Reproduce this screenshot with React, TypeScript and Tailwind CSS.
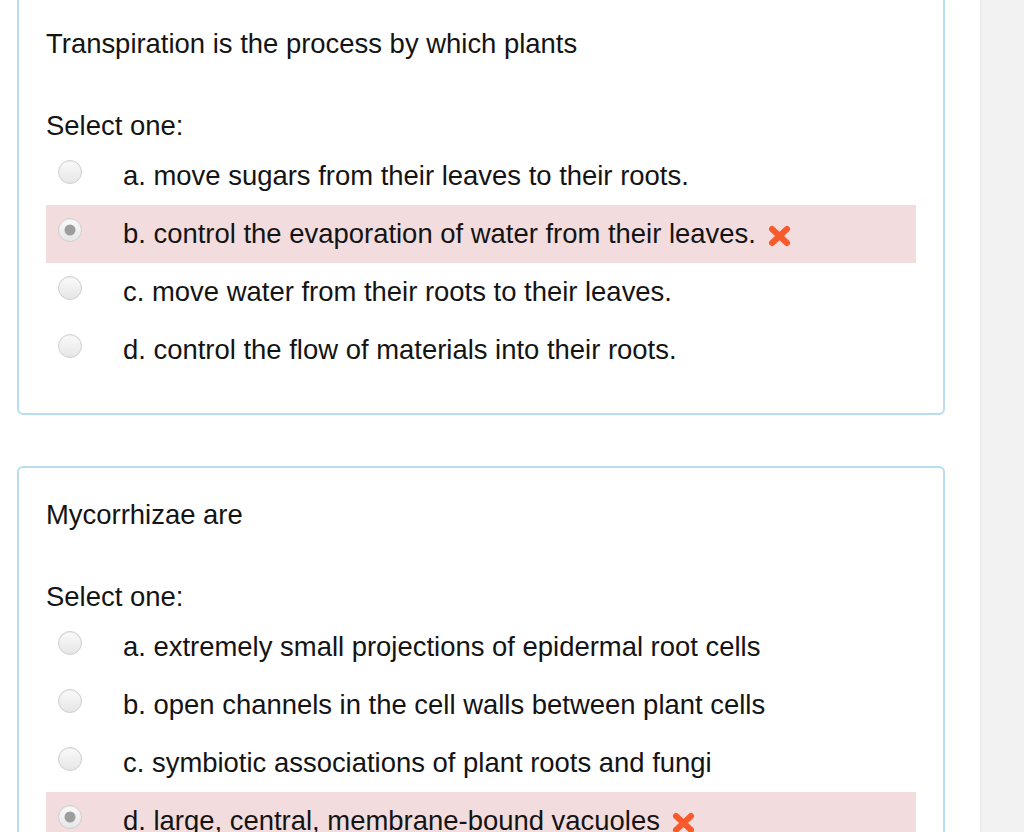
import React from "react";

type Opt = { label: string; checked?: boolean };

const Radio = ({ checked }: { checked?: boolean }) => (
  <div className="relative mb-[8px] ml-[12px] h-[24px] w-[24px] shrink-0 rounded-full border border-[#cfcfcf] bg-gradient-to-b from-[#fafafa] to-[#e6e6e6] shadow-[inset_0_1px_1px_rgba(0,0,0,0.05)]">
    {checked && (
      <div className="absolute left-1/2 top-1/2 h-[11px] w-[11px] -translate-x-1/2 -translate-y-1/2 rounded-full bg-[#9d9d9d]" />
    )}
  </div>
);

const XIcon = () => (
  <svg width="23" height="22" viewBox="0 0 23 22" className="ml-[12px] mt-[4px] shrink-0">
    <path d="M4 4 L19 18 M19 4 L4 18" stroke="#f85a2c" strokeWidth="6" strokeLinecap="round" />
  </svg>
);

const Question = ({ q, opts, className }: { q: string; opts: Opt[]; className?: string }) => (
  <div className={`ml-[17px] w-[928px] rounded-[6px] border-2 border-[#b6def0] px-[27px] pt-[31px] pb-[34px] ${className ?? ""}`}>
    <div className="h-[32px] leading-[32px]">{q}</div>
    <div className="mt-[50px] h-[32px] leading-[32px]">Select one:</div>
    <div className="mt-[5px]">
      {opts.map((o, i) => (
        <div key={i} className={`flex h-[58px] items-center ${o.checked ? "bg-[#f2dcdd]" : ""}`}>
          <Radio checked={o.checked} />
          <span className="ml-[41px] leading-[32px]">{o.label}</span>
          {o.checked && <XIcon />}
        </div>
      ))}
    </div>
  </div>
);

export default function App() {
  return (
    <div
      className="flex h-[832px] w-[1024px] overflow-hidden bg-white text-[27.45px] text-[#141414]"
      style={{ fontFamily: '"Liberation Sans", Arial, sans-serif' }}
    >
      <div className="w-[980px] shrink-0">
        <Question
          className="mt-[-5px]"
          q="Transpiration is the process by which plants"
          opts={[
            { label: "a. move sugars from their leaves to their roots." },
            { label: "b. control the evaporation of water from their leaves.", checked: true },
            { label: "c. move water from their roots to their leaves." },
            { label: "d. control the flow of materials into their roots." },
          ]}
        />
        <Question
          className="mt-[51px]"
          q="Mycorrhizae are"
          opts={[
            { label: "a. extremely small projections of epidermal root cells" },
            { label: "b. open channels in the cell walls between plant cells" },
            { label: "c. symbiotic associations of plant roots and fungi" },
            { label: "d. large, central, membrane-bound vacuoles", checked: true },
          ]}
        />
      </div>
      <div className="flex-1 border-l-2 border-[#ececec] bg-[#f2f2f2]" />
    </div>
  );
}
